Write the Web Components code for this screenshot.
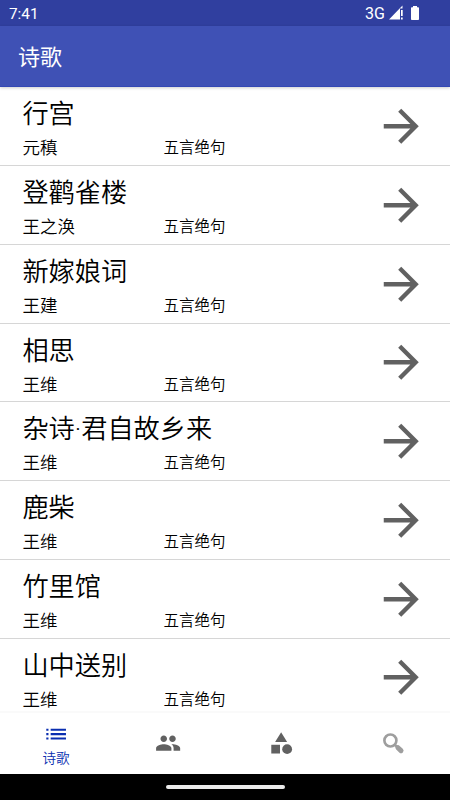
<!DOCTYPE html>
<html lang="zh-CN">
<head>
<meta charset="utf-8">
<title>诗歌</title>
<style>
  body {
    margin: 0;
    background: #fff;
    font-family: Roboto, "Noto Sans CJK SC", sans-serif;
  }
</style>
</head>
<body>
<poem-app></poem-app>
<script>
class StatusBar extends HTMLElement {
  constructor() {
    super()
    this.attachShadow({ mode: 'open' })
  }
  connectedCallback() {
    this.shadowRoot.innerHTML = /*html*/ `
      <style>
        :host {
          display: flex;
          justify-content: space-between;
          height: 26px;
          padding: 0 30px 0 9px;
          background: #303f9f;
          color: #fff;
          font-size: 15.3px;
          line-height: 28px;
          box-sizing: border-box;
        }
        .iconos { display: flex; }
        .red { font-size: 16px; }
        svg { display: block; margin-left: 3px; }
      </style>
      <span>${this.getAttribute('hora')}</span>
      <div class="iconos">
        <span class="red">3G</span>
        <svg width="32" height="26" viewBox="0 0 32 26" fill="#fff">
          <path d="M14.5 5.5V8.5H12v11H1z"/>
          <path d="M13 10h1.7v6H13zM13 17.6h1.7v1.9H13z"/>
          <path d="M25 6h4v1.3h1.2q.8 0 .8.8v11q0 .9-.8.9h-6.4q-.8 0-.8-.9v-11q0-.8.8-.8H25z"/>
        </svg>
      </div>
    `
  }
}
window.customElements.define('status-bar', StatusBar)

class TitleBar extends HTMLElement {
  constructor() {
    super()
    this.attachShadow({ mode: 'open' })
    this.shadowRoot.innerHTML = /*html*/ `
      <style>
        :host {
          display: block;
          height: 61px;
          padding-left: 18px;
          box-sizing: border-box;
          background: #3f51b5;
          border-bottom: 1px solid #3448b4;
          box-shadow: 0 1px 3px rgba(0, 0, 0, .2);
          position: relative;
          color: #fff;
          font-size: 22px;
          line-height: 63px;
        }
      </style>
      <slot></slot>
    `
  }
}
window.customElements.define('title-bar', TitleBar)

class PoemRow extends HTMLElement {
  constructor() {
    super()
    this.attachShadow({ mode: 'open' })
  }
  connectedCallback() {
    this.shadowRoot.innerHTML = /*html*/ `
      <style>
        :host {
          display: flex;
          flex: none;
          justify-content: space-between;
          height: 78.77px;
          padding: 0 22.2px 0 22.4px;
          box-sizing: border-box;
          border-bottom: 1px solid #d6d6d6;
          color: #000;
          font-weight: 350;
        }
        h2 {
          margin: 0;
          padding-top: 8px;
          font-size: 26.2px;
          font-weight: inherit;
          line-height: 39px;
        }
        .datos {
          display: grid;
          grid-template-columns: 141px auto;
          line-height: 28px;
        }
        .autor { font-size: 17.5px; }
        .tipo { font-size: 15.5px; }
        svg { display: block; margin-top: 12.6px; }
      </style>
      <div>
        <h2>${this.getAttribute('titulo')}</h2>
        <div class="datos">
          <span class="autor">${this.getAttribute('autor')}</span>
          <span class="tipo">${this.getAttribute('tipo')}</span>
        </div>
      </div>
      <svg width="52.5" height="52.5" viewBox="0 0 24 24" fill="#616161">
        <path d="M12 4l-1.41 1.41L16.17 11H4v2h12.17l-5.58 5.59L12 20l8-8z"/>
      </svg>
    `
  }
}
window.customElements.define('poem-row', PoemRow)

const ICONOS = {
  lista: '<path d="M3 13h2v-2H3v2zm0 4h2v-2H3v2zm0-8h2V7H3v2zm4 4h14v-2H7v2zm0 4h14v-2H7v2zM7 7v2h14V7H7z"/>',
  gente: '<path d="M16 11c1.66 0 2.99-1.34 2.99-3S17.66 5 16 5s-3 1.34-3 3 1.34 3 3 3zm-8 0c1.66 0 2.99-1.34 2.99-3S9.66 5 8 5 5 6.34 5 8s1.34 3 3 3zm0 2c-2.33 0-7 1.17-7 3.5V19h14v-2.5c0-2.33-4.67-3.5-7-3.5zm8 0c-.29 0-.62.02-.97.05 1.16.84 1.97 1.97 1.97 3.45V19h6v-2.5c0-2.33-4.67-3.5-7-3.5z"/>',
  formas: '<path d="M12 2l-5.5 9h11z"/><circle cx="17.5" cy="17.5" r="4.5"/><path d="M3 13.5h8v8H3z"/>',
  buscar: '<circle cx="9.5" cy="9.6" r="5.5" fill="none" stroke="currentColor" stroke-width="2.4"/><path d="M13.4 13.4l2.5 2.4" stroke="currentColor" stroke-width="2.4"/><path d="M16.4 16.2l2.8 2.7" stroke="currentColor" stroke-width="4.6" stroke-linecap="round"/>'
}

class NavItem extends HTMLElement {
  constructor() {
    super()
    this.attachShadow({ mode: 'open' })
  }
  connectedCallback() {
    this.shadowRoot.innerHTML = /*html*/ `
      <style>
        :host {
          display: flex;
          flex: 1;
          flex-direction: column;
          align-items: center;
          justify-content: center;
          padding-right: .4px;
          color: #616161;
          font-size: 13.6px;
          font-weight: 350;
          line-height: 21px;
        }
        :host([activo]) {
          padding-top: 3px;
          color: #0a2eb0;
        }
        :host([icono="buscar"]) { color: #9e9e9e; }
        svg { display: block; }
      </style>
      <svg width="26.25" height="26.25" viewBox="0 0 24 24" fill="currentColor">${ICONOS[this.getAttribute('icono')]}</svg>
      <slot></slot>
    `
  }
}
window.customElements.define('nav-item', NavItem)

class PoemApp extends HTMLElement {
  constructor() {
    super()
    this.attachShadow({ mode: 'open' })
  }
  static get poemas() {
    return [
      ['行宫', '元稹'],
      ['登鹳雀楼', '王之涣'],
      ['新嫁娘词', '王建'],
      ['相思', '王维'],
      ['杂诗·君自故乡来', '王维'],
      ['鹿柴', '王维'],
      ['竹里馆', '王维'],
      ['山中送别', '王维']
    ]
  }
  connectedCallback() {
    this.shadowRoot.innerHTML = /*html*/ `
      <style>
        :host {
          display: flex;
          flex-direction: column;
          height: 800px;
          overflow: hidden;
        }
        main {
          display: flex;
          flex-direction: column;
          flex: 1;
          min-height: 0;
          padding-top: .4px;
          overflow: hidden;
        }
        nav {
          display: flex;
          height: 63px;
          box-sizing: border-box;
          border-top: 2px solid #fafafa;
          background: #fff;
        }
        .gestos {
          display: flex;
          align-items: center;
          justify-content: center;
          height: 26px;
          background: #000;
        }
        .gestos span {
          width: 119px;
          height: 4.5px;
          border-radius: 3px;
          background: #ebebeb;
        }
      </style>
      <status-bar hora="7:41"></status-bar>
      <title-bar>诗歌</title-bar>
      <main>
        ${PoemApp.poemas.map(([titulo, autor]) => `<poem-row titulo="${titulo}" autor="${autor}" tipo="五言绝句"></poem-row>`).join('')}
      </main>
      <nav>
        <nav-item icono="lista" activo>诗歌</nav-item>
        <nav-item icono="gente"></nav-item>
        <nav-item icono="formas"></nav-item>
        <nav-item icono="buscar"></nav-item>
      </nav>
      <div class="gestos"><span></span></div>
    `
  }
}
window.customElements.define('poem-app', PoemApp)
</script>
</body>
</html>
